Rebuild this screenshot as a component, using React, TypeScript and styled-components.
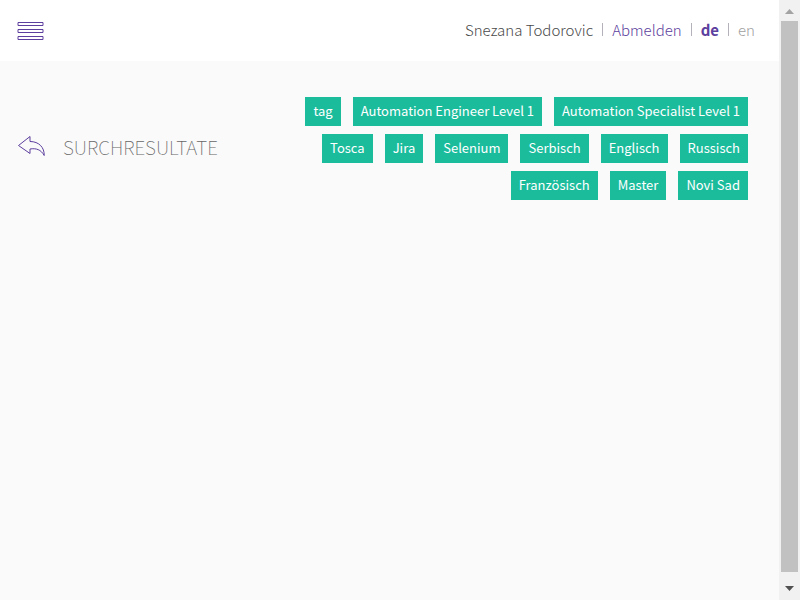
import React from "react";
import styled, { createGlobalStyle } from "styled-components";

const GlobalStyle = createGlobalStyle`
  *, *::before, *::after { box-sizing: border-box; }
  body {
    margin: 0;
    background: #fafafa;
    color: #4a4a4a;
    font-family: "Noto Sans CJK SC", Roboto, sans-serif;
  }
`;

const Shell = styled.div`
  display: flex;
  height: 100vh;
`;

const Page = styled.div`
  flex: 1;
  min-width: 0;
  overflow: hidden;
`;

const Header = styled.header`
  display: flex;
  align-items: center;
  justify-content: space-between;
  padding: 20px 24px 20px 17px;
  background: #ffffff;
`;

const IconButton = styled.button`
  display: flex;
  padding: 0;
  border: 0;
  background: none;
  color: #5c3f9e;
  cursor: pointer;
`;

const UserNav = styled.nav`
  display: flex;
  align-items: center;
  padding-bottom: 2px;
  font-size: 15px;
  font-weight: 300;
  line-height: 19px;
`;

const Divider = styled.span`
  width: 1px;
  height: 13px;
  margin: 0 9px;
  background: #b4b1ba;
`;

const NavLink = styled.a<{ $tone?: "active" | "muted" }>`
  color: ${({ $tone }) => ($tone === "muted" ? "#a0a0a0" : "#5c3f9e")};
  font-weight: ${({ $tone }) => ($tone === "active" ? 700 : 300)};
  text-decoration: none;
`;

const Main = styled.main`
  display: flex;
  align-items: center;
  justify-content: space-between;
  padding: 36px 31px 36px 17px;
`;

const Heading = styled.div`
  display: flex;
  align-items: center;
  gap: 17px;
  padding-bottom: 3px;
`;

const Title = styled.h1`
  margin: 0;
  color: #666666;
  font-size: 19px;
  font-weight: 100;
  line-height: 24px;
  text-transform: uppercase;
`;

const TagList = styled.ul`
  display: flex;
  flex: 0 1 63%;
  flex-wrap: wrap;
  justify-content: flex-end;
  gap: 8px 12px;
  margin: 0;
  padding: 0;
  list-style: none;
`;

const Tag = styled.li`
  padding: 4px 8px 5px;
  background: #1abc9c;
  color: #ffffff;
  font-size: 13px;
  line-height: 20px;
  white-space: nowrap;
`;

const ScrollRail = styled.div`
  display: flex;
  flex: 0 0 21px;
  flex-direction: column;
  padding: 0 2px;
  background: #f1f1f1;
`;

const ScrollArrow = styled.button<{ $tall?: boolean }>`
  display: flex;
  flex: 0 0 ${({ $tall }) => ($tall ? 28 : 21)}px;
  align-items: center;
  justify-content: center;
  padding: ${({ $tall }) => ($tall ? "5px 0 0" : "2px 0 0")};
  border: 0;
  background: none;
`;

const ScrollThumb = styled.div`
  flex: 1;
  background: #c1c1c1;
`;

const tags = [
  "tag",
  "Automation Engineer Level 1",
  "Automation Specialist Level 1",
  "Tosca",
  "Jira",
  "Selenium",
  "Serbisch",
  "Englisch",
  "Russisch",
  "Französisch",
  "Master",
  "Novi Sad",
];

const MenuIcon = () => (
  <svg width="27" height="21" viewBox="0 0 27 21" fill="none" stroke="currentColor" aria-hidden="true">
    <path d="M1 2.5h25v3H1zM1 9.5h25v3H1zM1 16.5h25v3H1z" />
  </svg>
);

const BackIcon = () => (
  <svg width="29" height="24" viewBox="0 0 29 24" fill="none" stroke="currentColor" aria-hidden="true">
    <path d="M13 1.5 1.5 10.5 13 18.5V14C19 13 24 14.5 27.2 20.5C27.5 12.5 22 6.5 13 6.5z" />
  </svg>
);

export default function App() {
  return (
    <>
      <GlobalStyle />
      <Shell>
        <Page>
          <Header>
            <IconButton type="button" aria-label="Menü">
              <MenuIcon />
            </IconButton>
            <UserNav>
              <span>Snezana Todorovic</span>
              <Divider />
              <NavLink href="#logout">Abmelden</NavLink>
              <Divider />
              <NavLink href="#de" $tone="active">de</NavLink>
              <Divider />
              <NavLink href="#en" $tone="muted">en</NavLink>
            </UserNav>
          </Header>
          <Main>
            <Heading>
              <IconButton type="button" aria-label="Zurück">
                <BackIcon />
              </IconButton>
              <Title>Surchresultate</Title>
            </Heading>
            <TagList>
              {tags.map((tag) => (
                <Tag key={tag}>{tag}</Tag>
              ))}
            </TagList>
          </Main>
        </Page>
        <ScrollRail>
          <ScrollArrow type="button" aria-label="Nach oben">
            <svg width="9" height="5" viewBox="0 0 9 5" fill="#a3a3a3" aria-hidden="true">
              <path d="M4.5 0 9 5H0z" />
            </svg>
          </ScrollArrow>
          <ScrollThumb />
          <ScrollArrow type="button" aria-label="Nach unten" $tall>
            <svg width="9" height="5" viewBox="0 0 9 5" fill="#505050" aria-hidden="true">
              <path d="M0 0h9L4.5 5z" />
            </svg>
          </ScrollArrow>
        </ScrollRail>
      </Shell>
    </>
  );
}
